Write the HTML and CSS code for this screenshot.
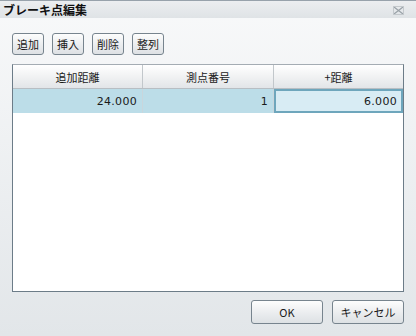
FILE: index.html
```html
<!DOCTYPE html>
<html lang="ja">
<head>
<meta charset="utf-8">
<link rel="stylesheet" href="styles.css">
</head>
<body>
<div class="window">
  <div class="titlebar">
    <span class="title">ブレーキ点編集</span>
    <svg class="close" width="11" height="9" viewBox="0 0 11 9">
      <path d="M1 1 L10 8 M10 1 L1 8" stroke="#9aa2a8" stroke-width="1.2" fill="none"/>
      <rect x="0.5" y="0.5" width="10" height="8" fill="none" stroke="#c4c9cd" stroke-width="1"/>
    </svg>
  </div>
  <div class="content">
    <div class="toolbar">
      <button class="tbtn">追加</button>
      <button class="tbtn">挿入</button>
      <button class="tbtn">削除</button>
      <button class="tbtn">整列</button>
    </div>
    <div class="grid">
      <div class="head">
        <div class="hcell">追加距離</div>
        <div class="hcell">測点番号</div>
        <div class="hcell last">+距離</div>
      </div>
      <div class="row">
        <div class="cell">24.000</div>
        <div class="cell">1</div>
        <div class="cell edit">6.000</div>
      </div>
    </div>
    <div class="footer">
      <button class="fbtn">OK</button>
      <button class="fbtn">キャンセル</button>
    </div>
  </div>
</div>
</body>
</html>
```
FILE: styles.css
```css
* { box-sizing: border-box; }
html, body { margin: 0; padding: 0; }
body {
  width: 416px;
  height: 336px;
  overflow: hidden;
  font-family: "Noto Sans CJK JP", "DejaVu Sans", sans-serif;
  font-size: 11px;
  color: #1a1a1a;
}
.window {
  width: 416px;
  height: 336px;
  border-top: 1px solid #98a2ab;
  display: flex;
  flex-direction: column;
  background: linear-gradient(#f8f9fa, #e2e6e9);
}
.titlebar {
  height: 17px;
  display: flex;
  align-items: center;
  justify-content: space-between;
  padding: 0 12px 0 3px;
  background: linear-gradient(#eceef0, #dfe3e6);
}
.title {
  font-weight: bold;
  font-size: 12px;
  line-height: 16px;
  color: #111;
}
.close { display: block; margin-top: 1px; }
.content {
  flex: 1;
  padding: 15px 12px 0 12px;
  display: flex;
  flex-direction: column;
}
.toolbar {
  display: flex;
  gap: 8px;
  height: 22px;
}
button {
  font-family: "Noto Sans CJK JP", "DejaVu Sans", sans-serif;
  color: #1a1a1a;
  padding: 0;
  margin: 0;
}
.tbtn {
  width: 32px;
  height: 22px;
  font-size: 11px;
  line-height: 18px;
  border: 1px solid #77848e;
  border-radius: 3px;
  background: linear-gradient(#fdfdfd, #eceef0 50%, #dde1e4);
}
.grid {
  margin-top: 9px;
  height: 228px;
  border: 1px solid #6c7c88;
  border-top-color: #a4acb3;
  background: #fff;
}
.head {
  display: grid;
  grid-template-columns: 130px 131px 1fr;
  height: 24px;
  border-bottom: 1px solid #b8bec3;
  background: linear-gradient(#ffffff, #f1f2f3 50%, #e2e5e8);
}
.hcell {
  display: flex;
  align-items: center;
  justify-content: center;
  border-right: 1px solid #c2c7cb;
  font-size: 11px;
}
.hcell.last { border-right: none; }
.row {
  display: grid;
  grid-template-columns: 130px 131px 1fr;
  height: 24px;
  background: #bcdde8;
}
.cell {
  display: flex;
  align-items: center;
  justify-content: flex-end;
  padding-right: 5px;
  border-right: 1px solid #c9d6dc;
  font-family: "DejaVu Sans", "Noto Sans CJK JP", sans-serif;
  font-size: 11px;
  letter-spacing: 0.3px;
}
.cell.edit {
  border: 2px solid #6ea6bc;
  background: #d8ecf4;
  padding-right: 4px;
}
.footer {
  display: flex;
  justify-content: flex-end;
  gap: 9px;
  margin-top: 8px;
}
.fbtn {
  width: 72px;
  height: 24px;
  font-size: 11px;
  border: 1px solid #77848e;
  border-radius: 3px;
  background: linear-gradient(#fdfdfd, #eceef0 50%, #dde1e4);
}
```
